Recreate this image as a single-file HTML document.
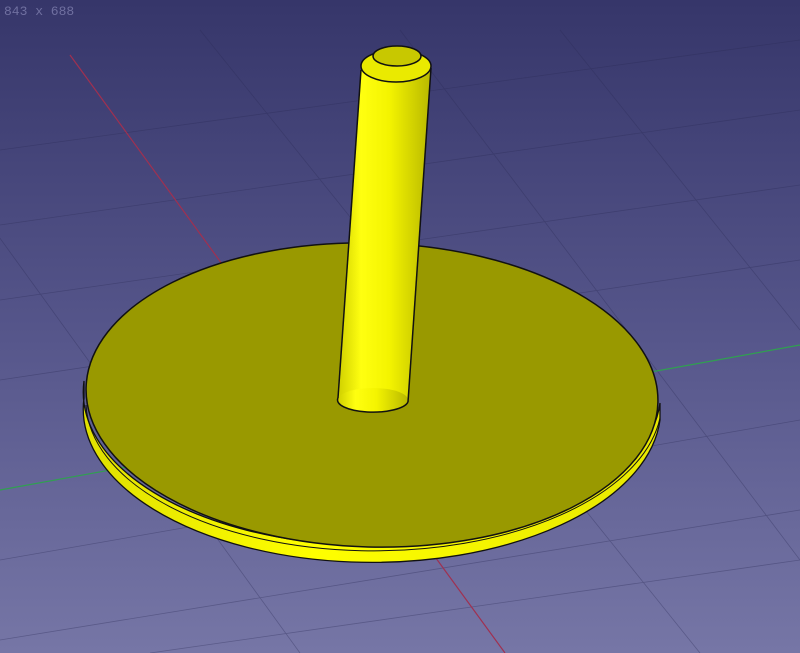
<!DOCTYPE html>
<html><head><style>html,body{margin:0;padding:0;width:800px;height:653px;overflow:hidden}</style></head>
<body>
<svg width="800" height="653" viewBox="0 0 800 653" xmlns="http://www.w3.org/2000/svg">
<defs>
<linearGradient id="bg" x1="0" y1="0" x2="0" y2="1">
<stop offset="0" stop-color="#36366a"/><stop offset="0.5" stop-color="#55558a"/><stop offset="1" stop-color="#7676a6"/></linearGradient>
<linearGradient id="cyl" x1="0" y1="0" x2="1" y2="0">
<stop offset="0" stop-color="#d0d000"/><stop offset="0.25" stop-color="#ffff10"/><stop offset="0.55" stop-color="#f4f400"/><stop offset="1" stop-color="#b8b800"/></linearGradient>
<linearGradient id="side" x1="0" y1="0" x2="1" y2="0">
<stop offset="0" stop-color="#e0e000"/><stop offset="0.4" stop-color="#ffff00"/><stop offset="1" stop-color="#e8e800"/></linearGradient>
</defs>
<rect width="800" height="653" fill="url(#bg)"/>
<g stroke="#2a2a55" stroke-width="0.8" opacity="0.35">
<line x1="0" y1="150" x2="800" y2="40"/>
<line x1="0" y1="225" x2="800" y2="110"/>
<line x1="0" y1="300" x2="800" y2="185"/>
<line x1="0" y1="380" x2="800" y2="260"/>
<line x1="0" y1="560" x2="800" y2="420"/>
<line x1="0" y1="640" x2="800" y2="510"/>
<line x1="150" y1="653" x2="800" y2="560"/>
<line x1="-100" y1="100" x2="300" y2="653"/>
<line x1="200" y1="30" x2="700" y2="653"/>
<line x1="400" y1="30" x2="800" y2="560"/>
<line x1="560" y1="30" x2="800" y2="330"/>
</g>
<line x1="70" y1="55" x2="505" y2="653" stroke="#a03050" stroke-width="1.2"/>
<line x1="0" y1="490" x2="800" y2="345" stroke="#30a050" stroke-width="1.2"/>
<text x="4" y="15" font-family="Liberation Mono, monospace" font-size="13" fill="#7070a0">843 x 688</text>
<path d="M84,398 A288,153 0 0 0 660,420 L660,403 A288,153 0 0 1 84,381 Z" fill="url(#side)" stroke="#111" stroke-width="1.3"/>
<path d="M86,405 A288,150 0 0 0 660,418" fill="none" stroke="#111" stroke-width="1"/>
<ellipse cx="372" cy="395" rx="286" ry="152" transform="rotate(1.5 372 395)" fill="#999900" stroke="#111" stroke-width="1.5"/>
<path d="M338,398 L361,70 L431,68 L408,402 Z" fill="url(#cyl)"/>
<ellipse cx="373" cy="400" rx="35" ry="12" fill="url(#cyl)"/>
<path d="M338,398 A35,12 0 0 0 408,402" fill="none" stroke="#111" stroke-width="1.5"/>
<line x1="338" y1="398" x2="361" y2="70" stroke="#111" stroke-width="1.5"/>
<line x1="408" y1="402" x2="431" y2="68" stroke="#111" stroke-width="1.5"/>
<ellipse cx="396" cy="66" rx="35" ry="16" fill="#eaea00" stroke="#111" stroke-width="1.5"/>
<ellipse cx="397" cy="56" rx="24" ry="10" fill="#c8c800" stroke="#111" stroke-width="1.5"/>
</svg>
</body></html>
